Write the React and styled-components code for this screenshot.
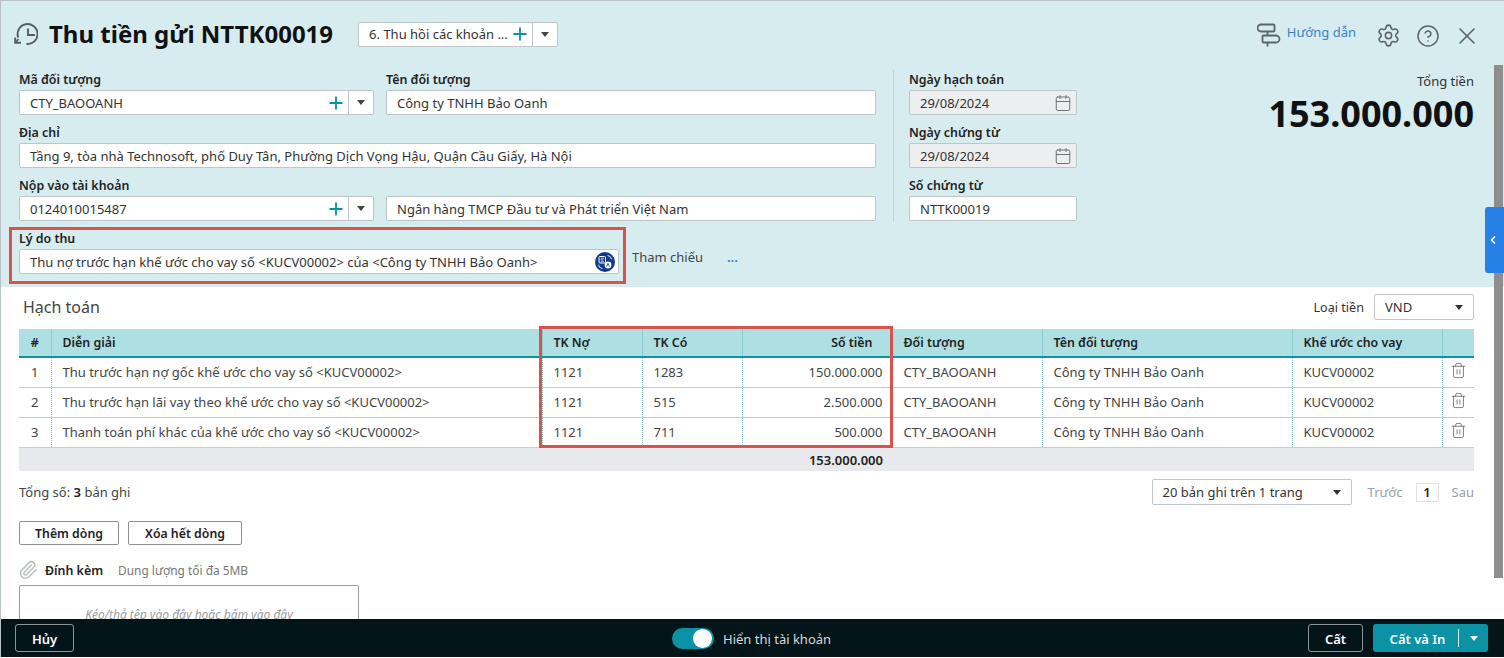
import React from "react";
import styled, { createGlobalStyle } from "styled-components";
import { Plus, Settings, CircleHelp, X, Calendar, Trash2, Paperclip, ChevronLeft } from "lucide-react";

const Global = createGlobalStyle`
  html, body { margin: 0; padding: 0; height: 100%; overflow: hidden; background: #fff; }
  body { font-family: "Noto Sans", "Open Sans", sans-serif; font-size: 13px; color: #333; }
  * { box-sizing: border-box; }
`;

const Page = styled.div`
  position: relative; width: 1504px; height: 658px; display: flex; flex-direction: column; overflow: hidden;
  border-top: 1px solid #b9c2c4; border-left: 1px solid #b9c2c4; background: #fff;
`;
const Main = styled.div`flex: 1; min-height: 0; overflow: hidden;`;
const Top = styled.header`height: 286px; background: #d6ecef; padding: 0 30px 0 18px;`;
const TitleRow = styled.div`height: 69px; display: flex; align-items: center; padding-bottom: 4px;`;
const TitleIcon = styled.svg`flex: none; margin: 1px 11px 0 -5px; color: #565e60;`;
const Title = styled.h1`margin: 0; font-size: 24px; line-height: 32px; font-weight: 700; color: #111; white-space: nowrap;`;
const Combo = styled.div`
  display: flex; align-items: center; height: 25px; width: ${p => p.$w ? p.$w + "px" : "auto"};
  background: #fff; border: 1px solid #bfc6c9; border-radius: 2px;
`;
const TemplateCombo = styled(Combo)`margin: 1px 0 0 25px;`;
const ComboText = styled.span`flex: 1; padding-left: 10px; white-space: nowrap; overflow: hidden;`;
const PlusBtn = styled.span`display: flex; width: 24px; justify-content: center; color: #0b93a5;`;
const Caret = styled.span`
  display: flex; align-items: center; justify-content: center; width: 25px; height: 100%; border-left: 1px solid #bfc6c9;
  &::after { content: ""; border-left: 4.5px solid transparent; border-right: 4.5px solid transparent; border-top: 5px solid #444; }
`;
const Tools = styled.div`margin: 4px -7px 0 auto; display: flex; align-items: center; color: #5d6567;`;
const GuideIcon = styled.svg`flex: none; margin-top: -2px;`;
const Guide = styled.span`color: #3b82c4; margin: -8px 20px 0 6px; font-size: 13px;`;
const ToolIcon = styled.span`display: flex; margin-left: ${p => p.$ml || 0}px;`;

const Form = styled.div`display: flex; align-items: flex-start;`;
const LeftForm = styled.div`width: 857px; display: grid; grid-template-columns: 355px 490px; column-gap: 12px; row-gap: 8px;`;
const Field = styled.div`grid-column: ${p => p.$span ? "1 / -1" : "auto"}; min-width: 0;`;
const Label = styled.label`display: block; height: 20px; line-height: 20px; font-size: 12.4px; font-weight: 600; color: #222;`;
const Input = styled.div`
  height: 25px; line-height: 24px; padding: 0 10px; background: ${p => p.$disabled ? "#eceef0" : "#fff"};
  border: 1px solid #bfc6c9; border-radius: 2px; white-space: nowrap; overflow: hidden;
  display: flex; align-items: center; justify-content: space-between;
`;
const Divider = styled.div`width: 1px; height: 152px; background: #c5d6d9; margin-left: 17px;`;
const MidForm = styled.div`width: 168px; margin-left: 15px; display: grid; row-gap: 8px;`;
const CalIcon = styled.span`display: flex; color: #5f6669; margin-right: -6px;`;
const Total = styled.div`flex: 1; text-align: right; padding-top: 1px;`;
const TotalLabel = styled.div`line-height: 20px; color: #333;`;
const TotalValue = styled.div`font-size: 36px; line-height: 46px; font-weight: 700; color: #111;`;

const ReasonRow = styled.div`display: flex; align-items: flex-end; margin-top: 7px;`;
const ReasonField = styled.div`width: 600px;`;
const Ref = styled.span`margin-left: 13px; width: 95px; line-height: 20px; padding-bottom: 7px; color: #444;`;
const RefDots = styled.span`color: #2d7cc7; font-weight: 600; padding-bottom: 7px; line-height: 20px;`;
const TranslateBadge = styled.svg`margin-right: -7px; flex: none;`;

const Section = styled.section`padding: 0 30px 0 18px;`;
const SectionHead = styled.div`height: 42px; display: flex; align-items: center;`;
const SectionTitle = styled.div`font-size: 16px; color: #444; margin-left: 4px; margin-top: -2px;`;
const Currency = styled.div`margin-left: auto; display: flex; align-items: center; gap: 10px; margin-top: -2px; font-size: 12.6px;`;

const Select = styled.div`
  display: flex; align-items: center; justify-content: space-between; width: ${p => p.$w}px; height: 26px; padding: 0 10px;
  background: #fff; border: 1px solid #bfc6c9; border-radius: 2px; font-size: 13px;
  &::after { content: ""; border-left: 4px solid transparent; border-right: 4px solid transparent; border-top: 5px solid #333; }
`;

const Table = styled.table`width: 1455px; table-layout: fixed; border-collapse: collapse;`;
const Th = styled.th`
  height: 28px; padding: 0 ${p => p.$right ? "19px" : "10px"} 0 ${p => p.$center ? "10px" : "11px"}; background: #aee0e3; font-size: 12.4px; font-weight: 600; color: #222;
  text-align: ${p => p.$right ? "right" : p.$center ? "center" : "left"};
  border-right: 1px solid #8fcbd0; border-bottom: 2px solid #0e93a2;
  &:last-child { border-right: 0; }
`;
const Td = styled.td`
  height: 30px; padding: 0 ${p => p.$right ? "9px" : "10px"} 0 ${p => p.$center ? "10px" : "11px"}; color: #444; white-space: nowrap; overflow: hidden;
  text-align: ${p => p.$right ? "right" : p.$center ? "center" : "left"};
  border-right: 1px dotted #8fc4c9; border-bottom: 1px solid #c9cccf;
  &:last-child { border-right: 0; padding: 0; }
`;
const TotalRow = styled.td`
  height: 24px; background: #e8e9ec; font-weight: 600; color: #222; padding: 2px 9px 0 10px; text-align: right;
`;
const TrashIcon = styled.span`display: flex; justify-content: center; color: #5a6163; margin-top: -3px;`;

const Pager = styled.div`display: flex; align-items: center; height: 26px; margin-top: 8px;`;
const Count = styled.div`color: #444; b { font-weight: 600; color: #222; }`;
const PagerRight = styled.div`margin-left: auto; display: flex; align-items: center;`;
const Muted = styled.span`color: #9aa0a3; margin-left: ${p => p.$ml || 0}px;`;
const PageNo = styled.span`
  width: 23px; height: 19px; margin: 0 13px; display: flex; align-items: center; justify-content: center;
  border: 1px solid #e0e2e4; font-weight: 600; color: #222;
`;
const Buttons = styled.div`display: flex; gap: 9px; margin-top: 16px;`;
const Button = styled.button`
  height: 24px; width: ${p => p.$w}px; padding: 0; background: #fff; border: 1px solid #8c9294; border-radius: 2px;
  font: 600 12.3px "Noto Sans", sans-serif; color: #222;
`;
const Attach = styled.div`display: flex; align-items: center; height: 20px; margin-top: 15px;`;
const ClipIcon = styled.span`display: flex; color: #b7bbbd; width: 27px; margin-left: -1px;`;
const AttachLabel = styled.span`font-size: 12.4px; font-weight: 600; color: #222;`;
const AttachHint = styled.span`font-size: 11.9px; color: #777; margin-left: 15px;`;
const Drop = styled.div`
  width: 340px; height: 60px; margin-top: 5px; border: 1px solid #9a9fa1; border-radius: 2px; padding-top: 20px;
  text-align: center; font-size: 12px; font-style: italic; color: #9a9fa1;
`;

const Footer = styled.footer`
  flex: none; height: 38px; margin-bottom: 1px; background: #04151a; display: flex; align-items: center; padding: 0 16px 0 14px; position: relative;
`;
const DarkBtn = styled.button`
  height: 28px; width: ${p => p.$w}px; background: transparent; border: 1px solid #8c9699; border-radius: 3px;
  color: #fff; font: 600 13px "Noto Sans", sans-serif; padding: 2px 0 0;
`;
const ToggleWrap = styled.div`position: absolute; left: 671px; top: 9px; display: flex; align-items: center; gap: 9px; color: #d5dadb;`;
const ToggleTrack = styled.span`
  width: 42px; height: 21px; border-radius: 11px; background: #0b93a5; position: relative; display: block;
  &::after { content: ""; position: absolute; right: 2px; top: 1px; width: 19px; height: 19px; border-radius: 50%; background: #fff; }
`;
const FootRight = styled.div`margin-left: auto; display: flex; gap: 10px;`;
const Primary = styled.div`
  width: 115px; height: 28px; background: #0b93a5; border-radius: 3px; color: #fff; font-weight: 600; display: flex; align-items: center;
`;
const PrimaryText = styled.span`flex: 1; text-align: center; padding: 2px 0 0 4px;`;
const PrimaryCaret = styled.span`
  width: 30px; height: 18px; border-left: 1px solid #d3eef1; display: flex; align-items: center; justify-content: center;
  &::after { content: ""; border-left: 4px solid transparent; border-right: 4px solid transparent; border-top: 5px solid #fff; }
`;

const ScrollThumb = styled.div`position: absolute; left: 1493px; top: 64px; width: 9px; height: 513px; background: #8e8e8e;`;
const SideTab = styled.div`
  position: absolute; left: 1484px; top: 206px; width: 19px; height: 66px; background: #2680e6; border-radius: 3px 0 0 3px;
  display: flex; align-items: center; justify-content: center; color: #fff; padding-right: 3px;
`;
const Highlight = styled.div`
  position: absolute; left: ${p => p.$x}px; top: ${p => p.$y}px; width: ${p => p.$w}px; height: ${p => p.$h}px;
  border: 3px solid #d8534d; pointer-events: none;
`;

const HistoryIcon = () => (
  <TitleIcon width="24" height="24" viewBox="0 0 24 24" fill="none" stroke="currentColor" strokeWidth="1.9">
    <path d="M4.2 15.5A10 10 0 1 1 12.5 22" />
    <path d="M1.2 15.5V20.8H7" />
    <path d="M1.5 20.5L4.5 17" />
    <path d="M14 6.5V13H21" />
  </TitleIcon>
);

const SignIcon = () => (
  <GuideIcon width="24" height="24" viewBox="0 0 24 24" fill="none" stroke="currentColor" strokeWidth="1.8" strokeLinejoin="round">
    <path d="M4 1.5H16.5a1 1 0 0 1 1 1v5a1 1 0 0 1-1 1H4a3.5 3.5 0 0 1 0-7z" />
    <path d="M6.5 12.5H19a3.5 3.5 0 0 1 0 7H6.5a1 1 0 0 1-1-1v-5a1 1 0 0 1 1-1z" />
    <path d="M10.5 8.5v4M10.5 19.5v4" />
  </GuideIcon>
);

const TranslateIcon = () => (
  <TranslateBadge width="20" height="20" viewBox="0 0 20 20">
    <circle cx="10" cy="10" r="10" fill="#0f3a8c" />
    <rect x="4" y="4.5" width="6.5" height="6.5" rx="1" fill="none" stroke="#fff" strokeWidth="1" />
    <path d="M5.8 6.3h3M5.8 7.8h2.6M5.8 9.3h3" stroke="#fff" strokeWidth=".7" />
    <circle cx="13" cy="13" r="3.4" fill="#fff" />
    <path d="M11.6 14.6l1.4-3.2 1.4 3.2" stroke="#0f3a8c" strokeWidth=".8" fill="none" />
    <path d="M12.5 3.4a4.5 4.5 0 0 1 4 4M7.5 16.6a4.5 4.5 0 0 1-4-4" stroke="#fff" strokeWidth=".9" fill="none" />
  </TranslateBadge>
);

const rows = [
  ["1", "Thu trước hạn nợ gốc khế ước cho vay số <KUCV00002>", "1121", "1283", "150.000.000"],
  ["2", "Thu trước hạn lãi vay theo khế ước cho vay số <KUCV00002>", "1121", "515", "2.500.000"],
  ["3", "Thanh toán phí khác của khế ước cho vay số <KUCV00002>", "1121", "711", "500.000"],
];
const cols = [32, 491, 100, 100, 150, 150, 250, 150, 32];

export default function App() {
  return (
    <Page>
      <Global />
      <Main>
        <Top>
          <TitleRow>
            <HistoryIcon />
            <Title>Thu tiền gửi NTTK00019</Title>
            <TemplateCombo $w={200}>
              <ComboText>6. Thu hồi các khoản ...</ComboText>
              <PlusBtn><Plus size={20} strokeWidth={2.2} /></PlusBtn>
              <Caret />
            </TemplateCombo>
            <Tools>
              <SignIcon />
              <Guide>Hướng dẫn</Guide>
              <ToolIcon><Settings size={25} strokeWidth={1.5} /></ToolIcon>
              <ToolIcon $ml={15}><CircleHelp size={24} strokeWidth={1.5} /></ToolIcon>
              <ToolIcon $ml={13}><X size={28} strokeWidth={1.4} /></ToolIcon>
            </Tools>
          </TitleRow>
          <Form>
            <LeftForm>
              <Field>
                <Label>Mã đối tượng</Label>
                <Combo>
                  <ComboText>CTY_BAOOANH</ComboText>
                  <PlusBtn><Plus size={20} strokeWidth={2.2} /></PlusBtn>
                  <Caret />
                </Combo>
              </Field>
              <Field>
                <Label>Tên đối tượng</Label>
                <Input>Công ty TNHH Bảo Oanh</Input>
              </Field>
              <Field $span>
                <Label>Địa chỉ</Label>
                <Input>Tầng 9, tòa nhà Technosoft, phố Duy Tân, Phường Dịch Vọng Hậu, Quận Cầu Giấy, Hà Nội</Input>
              </Field>
              <Field>
                <Label>Nộp vào tài khoản</Label>
                <Combo>
                  <ComboText>0124010015487</ComboText>
                  <PlusBtn><Plus size={20} strokeWidth={2.2} /></PlusBtn>
                  <Caret />
                </Combo>
              </Field>
              <Field>
                <Label>&nbsp;</Label>
                <Input>Ngân hàng TMCP Đầu tư và Phát triển Việt Nam</Input>
              </Field>
            </LeftForm>
            <Divider />
            <MidForm>
              <Field>
                <Label>Ngày hạch toán</Label>
                <Input $disabled>29/08/2024<CalIcon><Calendar size={18} strokeWidth={1.2} /></CalIcon></Input>
              </Field>
              <Field>
                <Label>Ngày chứng từ</Label>
                <Input $disabled>29/08/2024<CalIcon><Calendar size={18} strokeWidth={1.2} /></CalIcon></Input>
              </Field>
              <Field>
                <Label>Số chứng từ</Label>
                <Input>NTTK00019</Input>
              </Field>
            </MidForm>
            <Total>
              <TotalLabel>Tổng tiền</TotalLabel>
              <TotalValue>153.000.000</TotalValue>
            </Total>
          </Form>
          <ReasonRow>
            <ReasonField>
              <Label>Lý do thu</Label>
              <Input>Thu nợ trước hạn khế ước cho vay số &lt;KUCV00002&gt; của &lt;Công ty TNHH Bảo Oanh&gt;<TranslateIcon /></Input>
            </ReasonField>
            <Ref>Tham chiếu</Ref>
            <RefDots>...</RefDots>
          </ReasonRow>
        </Top>
        <Section>
          <SectionHead>
            <SectionTitle>Hạch toán</SectionTitle>
            <Currency>Loại tiền<Select $w={100}>VND</Select></Currency>
          </SectionHead>
          <Table>
            <colgroup>{cols.map((w, i) => <col key={i} style={{ width: w }} />)}</colgroup>
            <thead>
              <tr>
                <Th $center>#</Th>
                <Th>Diễn giải</Th>
                <Th>TK Nợ</Th>
                <Th>TK Có</Th>
                <Th $right>Số tiền</Th>
                <Th>Đối tượng</Th>
                <Th>Tên đối tượng</Th>
                <Th>Khế ước cho vay</Th>
                <Th />
              </tr>
            </thead>
            <tbody>
              {rows.map(r => (
                <tr key={r[0]}>
                  <Td $center>{r[0]}</Td>
                  <Td>{r[1]}</Td>
                  <Td>{r[2]}</Td>
                  <Td>{r[3]}</Td>
                  <Td $right>{r[4]}</Td>
                  <Td>CTY_BAOOANH</Td>
                  <Td>Công ty TNHH Bảo Oanh</Td>
                  <Td>KUCV00002</Td>
                  <Td $center><TrashIcon><Trash2 size={17} strokeWidth={1.1} /></TrashIcon></Td>
                </tr>
              ))}
              <tr>
                <TotalRow colSpan={5}>153.000.000</TotalRow>
                <TotalRow colSpan={4} />
              </tr>
            </tbody>
          </Table>
          <Pager>
            <Count>Tổng số: <b>3</b> bản ghi</Count>
            <PagerRight>
              <Select $w={200}>20 bản ghi trên 1 trang</Select>
              <Muted $ml={16}>Trước</Muted>
              <PageNo>1</PageNo>
              <Muted>Sau</Muted>
            </PagerRight>
          </Pager>
          <Buttons>
            <Button $w={100}>Thêm dòng</Button>
            <Button $w={114}>Xóa hết dòng</Button>
          </Buttons>
          <Attach>
            <ClipIcon><Paperclip size={20} strokeWidth={1.7} /></ClipIcon>
            <AttachLabel>Đính kèm</AttachLabel>
            <AttachHint>Dung lượng tối đa 5MB</AttachHint>
          </Attach>
          <Drop>Kéo/thả tệp vào đây hoặc bấm vào đây</Drop>
        </Section>
      </Main>
      <Footer>
        <DarkBtn $w={59}>Hủy</DarkBtn>
        <ToggleWrap><ToggleTrack />Hiển thị tài khoản</ToggleWrap>
        <FootRight>
          <DarkBtn $w={55}>Cất</DarkBtn>
          <Primary><PrimaryText>Cất và In</PrimaryText><PrimaryCaret /></Primary>
        </FootRight>
      </Footer>
      <ScrollThumb />
      <SideTab><ChevronLeft size={12} strokeWidth={3.5} /></SideTab>
      <Highlight $x={8} $y={226} $w={617} $h={57} />
      <Highlight $x={538} $y={325} $w={354} $h={122} />
    </Page>
  );
}
